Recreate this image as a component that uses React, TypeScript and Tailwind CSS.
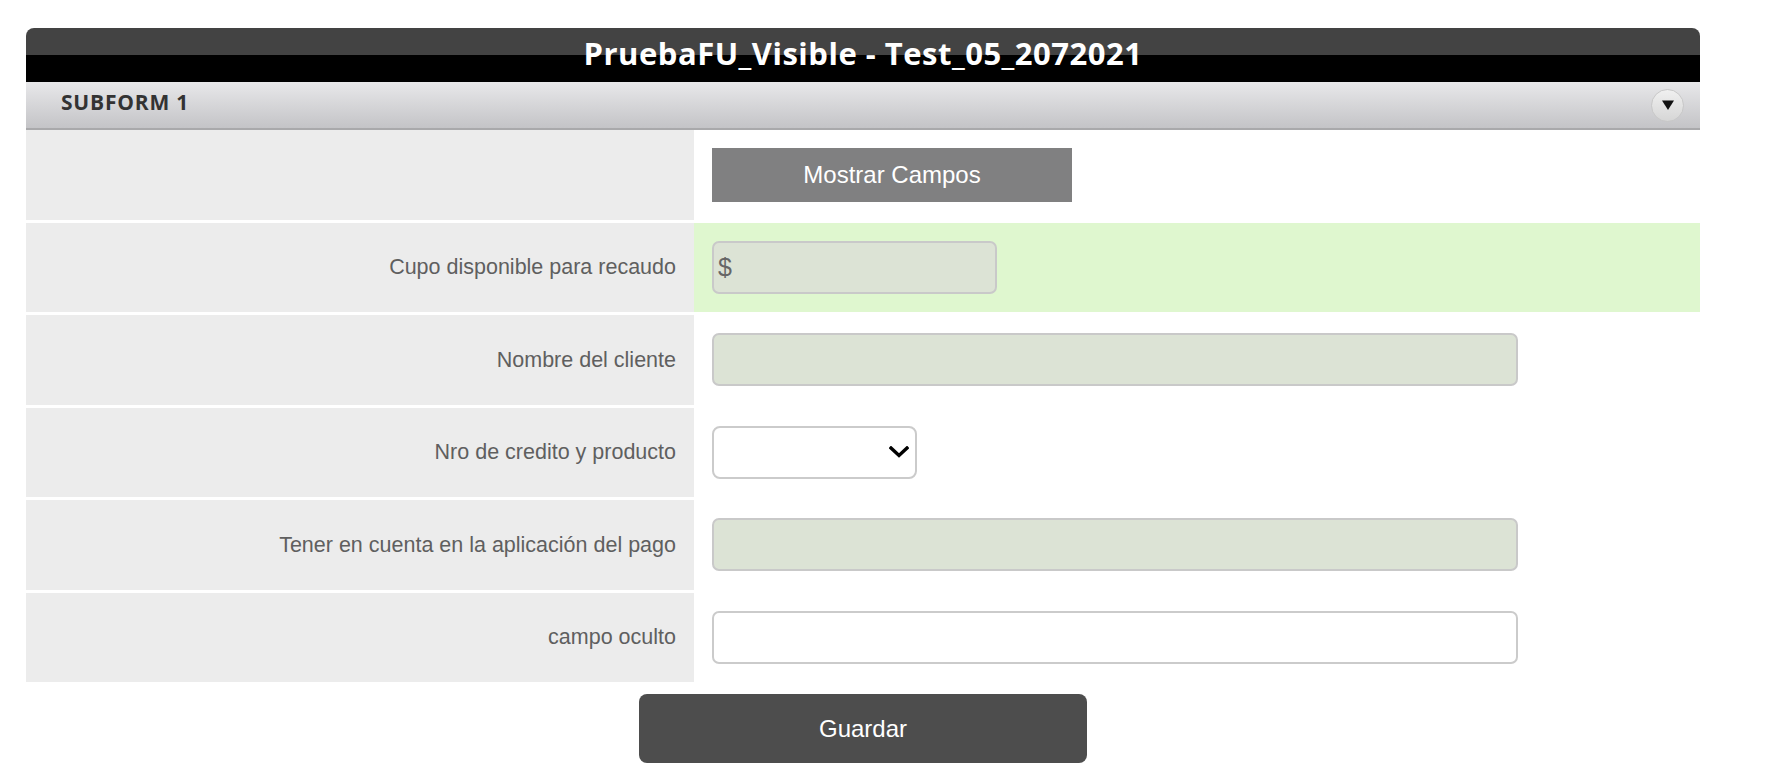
import React from "react";

const Chevron = () => (
  <svg width="20" height="12" viewBox="0 0 20 12" className="block">
    <polyline points="2,2 10,9.5 18,2" fill="none" stroke="#000" strokeWidth="3.4" strokeLinecap="square" />
  </svg>
);

type Row = {
  label: string;
  kind: "button" | "money" | "wideGreen" | "select" | "wideWhite";
  green?: boolean;
};

const rows: Row[] = [
  { label: "", kind: "button" },
  { label: "Cupo disponible para recaudo", kind: "money", green: true },
  { label: "Nombre del cliente", kind: "wideGreen" },
  { label: "Nro de credito y producto", kind: "select" },
  { label: "Tener en cuenta en la aplicación del pago", kind: "wideGreen" },
  { label: "campo oculto", kind: "wideWhite" },
];

function Field({ kind }: { kind: Row["kind"] }) {
  if (kind === "button") {
    return (
      <div className="w-[360px] h-[54px] bg-[#808081] text-white text-[24px] flex items-center justify-center">
        Mostrar Campos
      </div>
    );
  }
  if (kind === "money") {
    return (
      <div className="w-[285px] h-[53px] rounded-[7px] border-2 border-[#c9c9c9] bg-[#dce3d5] flex items-center pl-[4px] text-[25px] text-[#666]">
        $
      </div>
    );
  }
  if (kind === "wideGreen") {
    return <div className="w-[806px] h-[53px] rounded-[7px] border-2 border-[#c9c9c9] bg-[#dce3d5]" />;
  }
  if (kind === "select") {
    return (
      <div className="w-[205px] h-[53px] rounded-[8px] border-2 border-[#cbcbcb] bg-white flex items-center justify-end pr-[6px]">
        <Chevron />
      </div>
    );
  }
  return <div className="w-[806px] h-[53px] rounded-[7px] border-2 border-[#cbcbcb] bg-white" />;
}

export default function App() {
  return (
    <div className="w-[1766px] h-[764px] bg-white overflow-hidden font-['Liberation_Sans',Arial,sans-serif]">
      <div className="ml-[26px] pt-[28px] w-[1674px]">
        <div className="h-[54px] rounded-t-[8px] bg-[linear-gradient(to_bottom,#434343_0%,#434343_50%,#000_50%,#000_100%)] flex items-center justify-center">
          <span className="text-white font-bold text-[31px] font-['Open_Sans','Liberation_Sans',sans-serif] tracking-[0.5px] leading-none -mt-[4px]">
            PruebaFU_Visible - Test_05_2072021
          </span>
        </div>
        <div className="h-[48px] border-b-2 border-[#a9a9ab] bg-gradient-to-b from-[#e8e8ea] to-[#c4c4c7] flex items-center justify-between pl-[35px] pr-[16px]">
          <span className="font-bold text-[21px] text-[#333] font-['Open_Sans','Liberation_Sans',sans-serif] tracking-[0.8px] leading-none -mt-[5px]">
            SUBFORM 1
          </span>
          <div className="w-[33px] h-[33px] rounded-full bg-gradient-to-b from-[#f0f0f0] to-[#d6d6d6] border border-[#c8c8c8] flex items-center justify-center">
            <svg width="14" height="12" viewBox="0 0 14 12">
              <polygon points="1,1.5 13,1.5 7,11" fill="#111" />
            </svg>
          </div>
        </div>
        <div className="flex flex-col gap-[3px]">
          {rows.map((r, i) => (
            <div key={i} className="grid grid-cols-[668px_1fr] h-[89.5px]">
              <div className="bg-[#ececec] flex items-center justify-end pr-[18px] text-[21.5px] text-[#5f5f5f]">
                {r.label}
              </div>
              <div className={`${r.green ? "bg-[#dff7cf]" : "bg-white"} flex items-center pl-[18px]`}>
                <Field kind={r.kind} />
              </div>
            </div>
          ))}
        </div>
        <div className="flex justify-center mt-[12px]">
          <div className="w-[448px] h-[69px] rounded-[8px] bg-[#4d4d4d] text-white text-[24px] flex items-center justify-center">
            Guardar
          </div>
        </div>
      </div>
    </div>
  );
}
